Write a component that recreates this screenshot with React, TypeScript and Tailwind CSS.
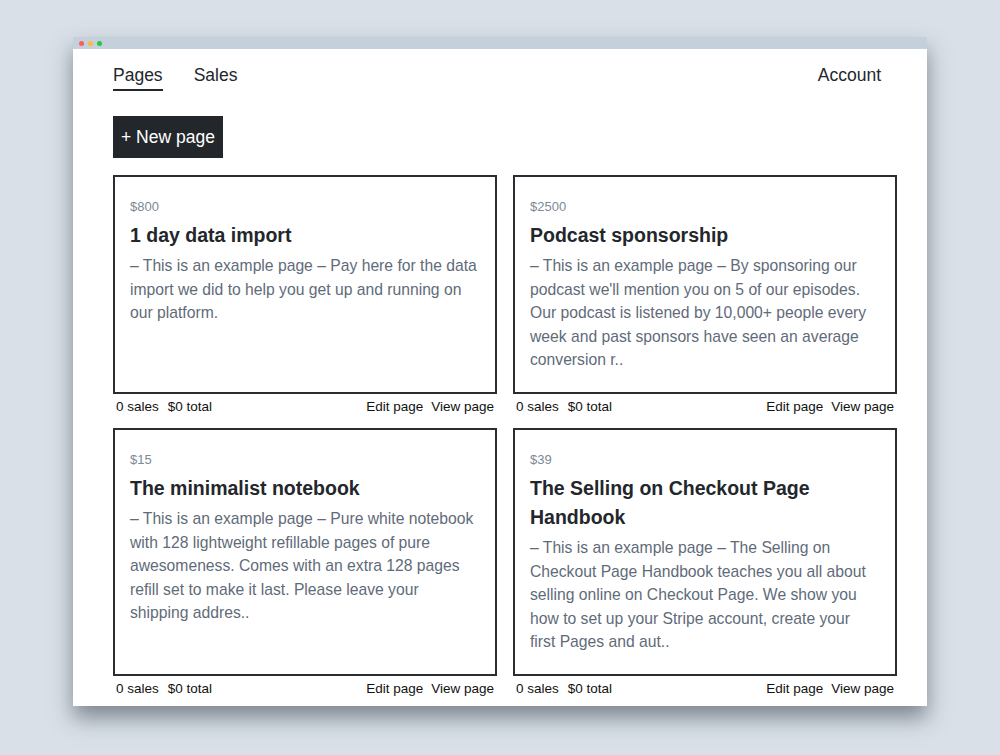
import React from "react";

const cards = [
  {
    price: "$800",
    title: "1 day data import",
    desc: "– This is an example page – Pay here for the data import we did to help you get up and running on our platform.",
  },
  {
    price: "$2500",
    title: "Podcast sponsorship",
    desc: "– This is an example page – By sponsoring our podcast we'll mention you on 5 of our episodes. Our podcast is listened by 10,000+ people every week and past sponsors have seen an average conversion r..",
  },
  {
    price: "$15",
    title: "The minimalist notebook",
    desc: "– This is an example page – Pure white notebook with 128 lightweight refillable pages of pure awesomeness. Comes with an extra 128 pages refill set to make it last. Please leave your shipping addres..",
  },
  {
    price: "$39",
    title: "The Selling on Checkout Page Handbook",
    desc: "– This is an example page – The Selling on Checkout Page Handbook teaches you all about selling online on Checkout Page. We show you how to set up your Stripe account, create your first Pages and aut..",
  },
];

function Card({ c }: { c: (typeof cards)[number] }) {
  return (
    <div className="flex flex-col">
      <div className="flex-1 border-2 border-[#2a2e33] pt-[20px] pb-[20px] pl-[15px] pr-[18px]">
        <div className="text-[13px] leading-[20px] text-[#7d8997]">{c.price}</div>
        <div className="mt-[4px] text-[19.5px] font-bold leading-[29px] text-[#23272c]">{c.title}</div>
        <div className="mt-[4px] text-[15.7px] leading-[23.6px] text-[#5f6b79]">{c.desc}</div>
      </div>
      <div className="flex h-[26px] items-center justify-between px-[3px] text-[13.5px] text-[#111]">
        <div className="flex gap-[9px]">
          <span>0 sales</span>
          <span>$0 total</span>
        </div>
        <div className="flex gap-[8px]">
          <span>Edit page</span>
          <span>View page</span>
        </div>
      </div>
    </div>
  );
}

export default function App() {
  return (
    <div
      className="flex h-[755px] w-[1000px] justify-center bg-[#d9e0e8] pt-[37px]"
      style={{ fontFamily: '"Liberation Sans", Arial, sans-serif' }}
    >
      <div className="flex h-[669px] w-[854px] flex-col bg-white shadow-[0_12px_20px_rgba(40,50,60,0.5)]">
        <div className="flex h-[12px] items-center gap-[4px] bg-[#c4d0db] pl-[6px]">
          <span className="h-[5px] w-[5px] rounded-full bg-[#fc5f57]" />
          <span className="h-[5px] w-[5px] rounded-full bg-[#fdbc2e]" />
          <span className="h-[5px] w-[5px] rounded-full bg-[#28c840]" />
        </div>
        <div className="flex items-start justify-between pl-[40px] pr-[46px] pt-[16px]">
          <div className="flex gap-[31px] text-[17.5px] text-[#23272c]">
            <span className="border-b-2 border-[#23272c] pb-[4px] leading-[20px]">Pages</span>
            <span className="leading-[20px]">Sales</span>
          </div>
          <span className="text-[17.5px] leading-[20px] text-[#23272c]">Account</span>
        </div>
        <div className="pl-[40px] pt-[25px]">
          <div className="inline-flex h-[42px] items-center bg-[#23272c] px-[8px] text-[17.5px] text-white">
            + New page
          </div>
        </div>
        <div className="mt-[17px] grid grid-cols-2 gap-x-[16px] gap-y-[8px] pl-[40px] pr-[30px]">
          {cards.map((c) => (
            <Card key={c.title} c={c} />
          ))}
        </div>
      </div>
    </div>
  );
}
